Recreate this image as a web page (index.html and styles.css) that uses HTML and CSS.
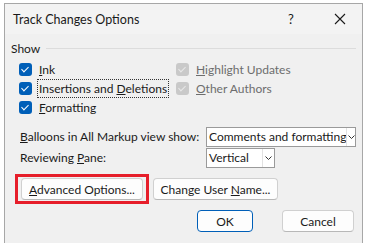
FILE: index.html
```html
<!DOCTYPE html>
<html lang="en">
<head>
  <meta charset="UTF-8">
  <title>Track Changes Options</title>
  <link rel="stylesheet" href="styles.css">
</head>
<body>

  <div class="dialog">
    <!-- Title bar -->
    <div class="titlebar">
      <span class="title">Track Changes Options</span>
      <span class="help">?</span>
      <span class="close">
        <svg width="12" height="12" viewBox="0 0 12 12"><path d="M1 1L11 11M11 1L1 11" stroke="#1a1a1a" stroke-width="1.1" fill="none"/></svg>
      </span>
    </div>

    <!-- Show group -->
    <div class="group-label"><span>Show</span><div class="rule"></div></div>
    <div class="checks">
      <div class="check-col">
        <label class="check"><span class="box on"></span><span><u>I</u>nk</span></label>
        <label class="check"><span class="box on"></span><span class="focus">Insertions and <u>D</u>eletions</span></label>
        <label class="check"><span class="box on"></span><span><u>F</u>ormatting</span></label>
      </div>
      <div class="check-col disabled">
        <label class="check"><span class="box off"></span><span><u>H</u>ighlight Updates</span></label>
        <label class="check"><span class="box off"></span><span><u>O</u>ther Authors</span></label>
      </div>
    </div>

    <!-- Balloons / pane -->
    <div class="fields">
      <div class="field">
        <span class="field-label"><u>B</u>alloons in All Markup view show:</span>
        <span class="select wide">Comments and formatting<span class="arrow"><svg width="7" height="4" viewBox="0 0 7 4"><path d="M0.5 0.5L3.5 3.5L6.5 0.5" stroke="#333" fill="none"/></svg></span></span>
      </div>
      <div class="field">
        <span class="field-label">Reviewing <u>P</u>ane:</span>
        <span class="select narrow">Vertical<span class="arrow"><svg width="7" height="4" viewBox="0 0 7 4"><path d="M0.5 0.5L3.5 3.5L6.5 0.5" stroke="#333" fill="none"/></svg></span></span>
      </div>
    </div>

    <!-- Buttons -->
    <div class="button-row">
      <div class="highlight"><button class="btn adv"><u>A</u>dvanced Options...</button></div>
      <button class="btn user">Change User <u>N</u>ame...</button>
    </div>
    <div class="button-row end">
      <button class="btn ok">OK</button>
      <button class="btn cancel">Cancel</button>
    </div>
  </div>

</body>
</html>
```

FILE: styles.css
```css
body {
  margin: 0;
  background-color: #ffffff;
  font-family: Lato, "Liberation Sans", sans-serif;
  font-size: 12px;
  color: #1a1a1a;
  white-space: nowrap;
}
.dialog {
  margin: 3px 0 0 4px;
  width: 359px;
  height: 242px;
  box-sizing: border-box;
  border: 1px solid #a7a7a7;
  background-color: #f0f0f0;
}
.titlebar {
  height: 30px;
  display: flex;
  align-items: center;
  padding-left: 8px;
  background-color: #f3f3f3;
}
.title {
  flex: 1;
  font-size: 12.5px;
}
.help {
  width: 20px;
  margin-right: 26px;
  margin-left: 2px;
  font-size: 13px;
}
.close {
  display: flex;
  width: 28px;
}
.group-label {
  display: flex;
  align-items: center;
  padding: 6px 6px 0 6px;
  height: 16px;
}
.group-label .rule {
  flex: 1;
  height: 1px;
  background-color: #dcdcdc;
  margin-left: 6px;
}
.checks {
  display: flex;
  padding: 4px 0 0 14px;
}
.check-col {
  width: 157px;
}
.check {
  display: flex;
  align-items: center;
  height: 19px;
}
.box {
  flex: none;
  width: 13px;
  height: 13px;
  border-radius: 3px;
  margin-right: 7px;
  position: relative;
}
.box::after {
  content: "";
  position: absolute;
  left: 4px;
  top: 2px;
  width: 3px;
  height: 6px;
  border-right: 1px solid #ffffff;
  border-bottom: 1px solid #ffffff;
  transform: rotate(45deg);
}
.box.on {
  background-color: #005fb8;
}
.box.off {
  background-color: #c9c9c9;
}
.box.off::after {
  border-color: #e8e8e8;
}
.disabled {
  color: #6d6d6d;
}
.focus {
  outline: 1px dotted #333;
  outline-offset: 1px;
}
.fields {
  padding: 9px 0 0 15px;
}
.field {
  display: flex;
  align-items: center;
  height: 21px;
}
.field-label {
  width: 186px;
}
.select {
  display: flex;
  align-items: center;
  height: 20px;
  box-sizing: border-box;
  border: 1px solid #9a9a9a;
  background-color: #ffffff;
  padding-left: 2px;
}
.select.wide {
  width: 150px;
}
.select.narrow {
  width: 69px;
}
.arrow {
  margin-left: auto;
  width: 11px;
  height: 18px;
  display: flex;
  align-items: center;
  justify-content: center;
  border-left: 1px solid #e2e2e2;
}
.button-row {
  display: flex;
  align-items: center;
  padding-left: 10px;
  margin-top: 6px;
}
.button-row.end {
  justify-content: flex-end;
  padding-right: 8px;
  margin-top: 6px;
}
.highlight {
  border: 3px solid #e61e2a;
  padding: 1px 3px;
  margin-right: 4px;
}
.btn {
  font-family: inherit;
  font-size: 12px;
  color: #1a1a1a;
  height: 22px;
  padding: 0;
  background-color: #fdfdfd;
  border: 1px solid #d0d0d0;
  border-bottom-color: #b8b8b8;
  border-radius: 4px;
}
.btn.adv {
  width: 122px;
}
.btn.user {
  width: 125px;
}
.btn.ok {
  width: 56px;
  border: 1px solid #005fb8;
  margin-right: 29px;
}
.btn.cancel {
  width: 72px;
}
```
